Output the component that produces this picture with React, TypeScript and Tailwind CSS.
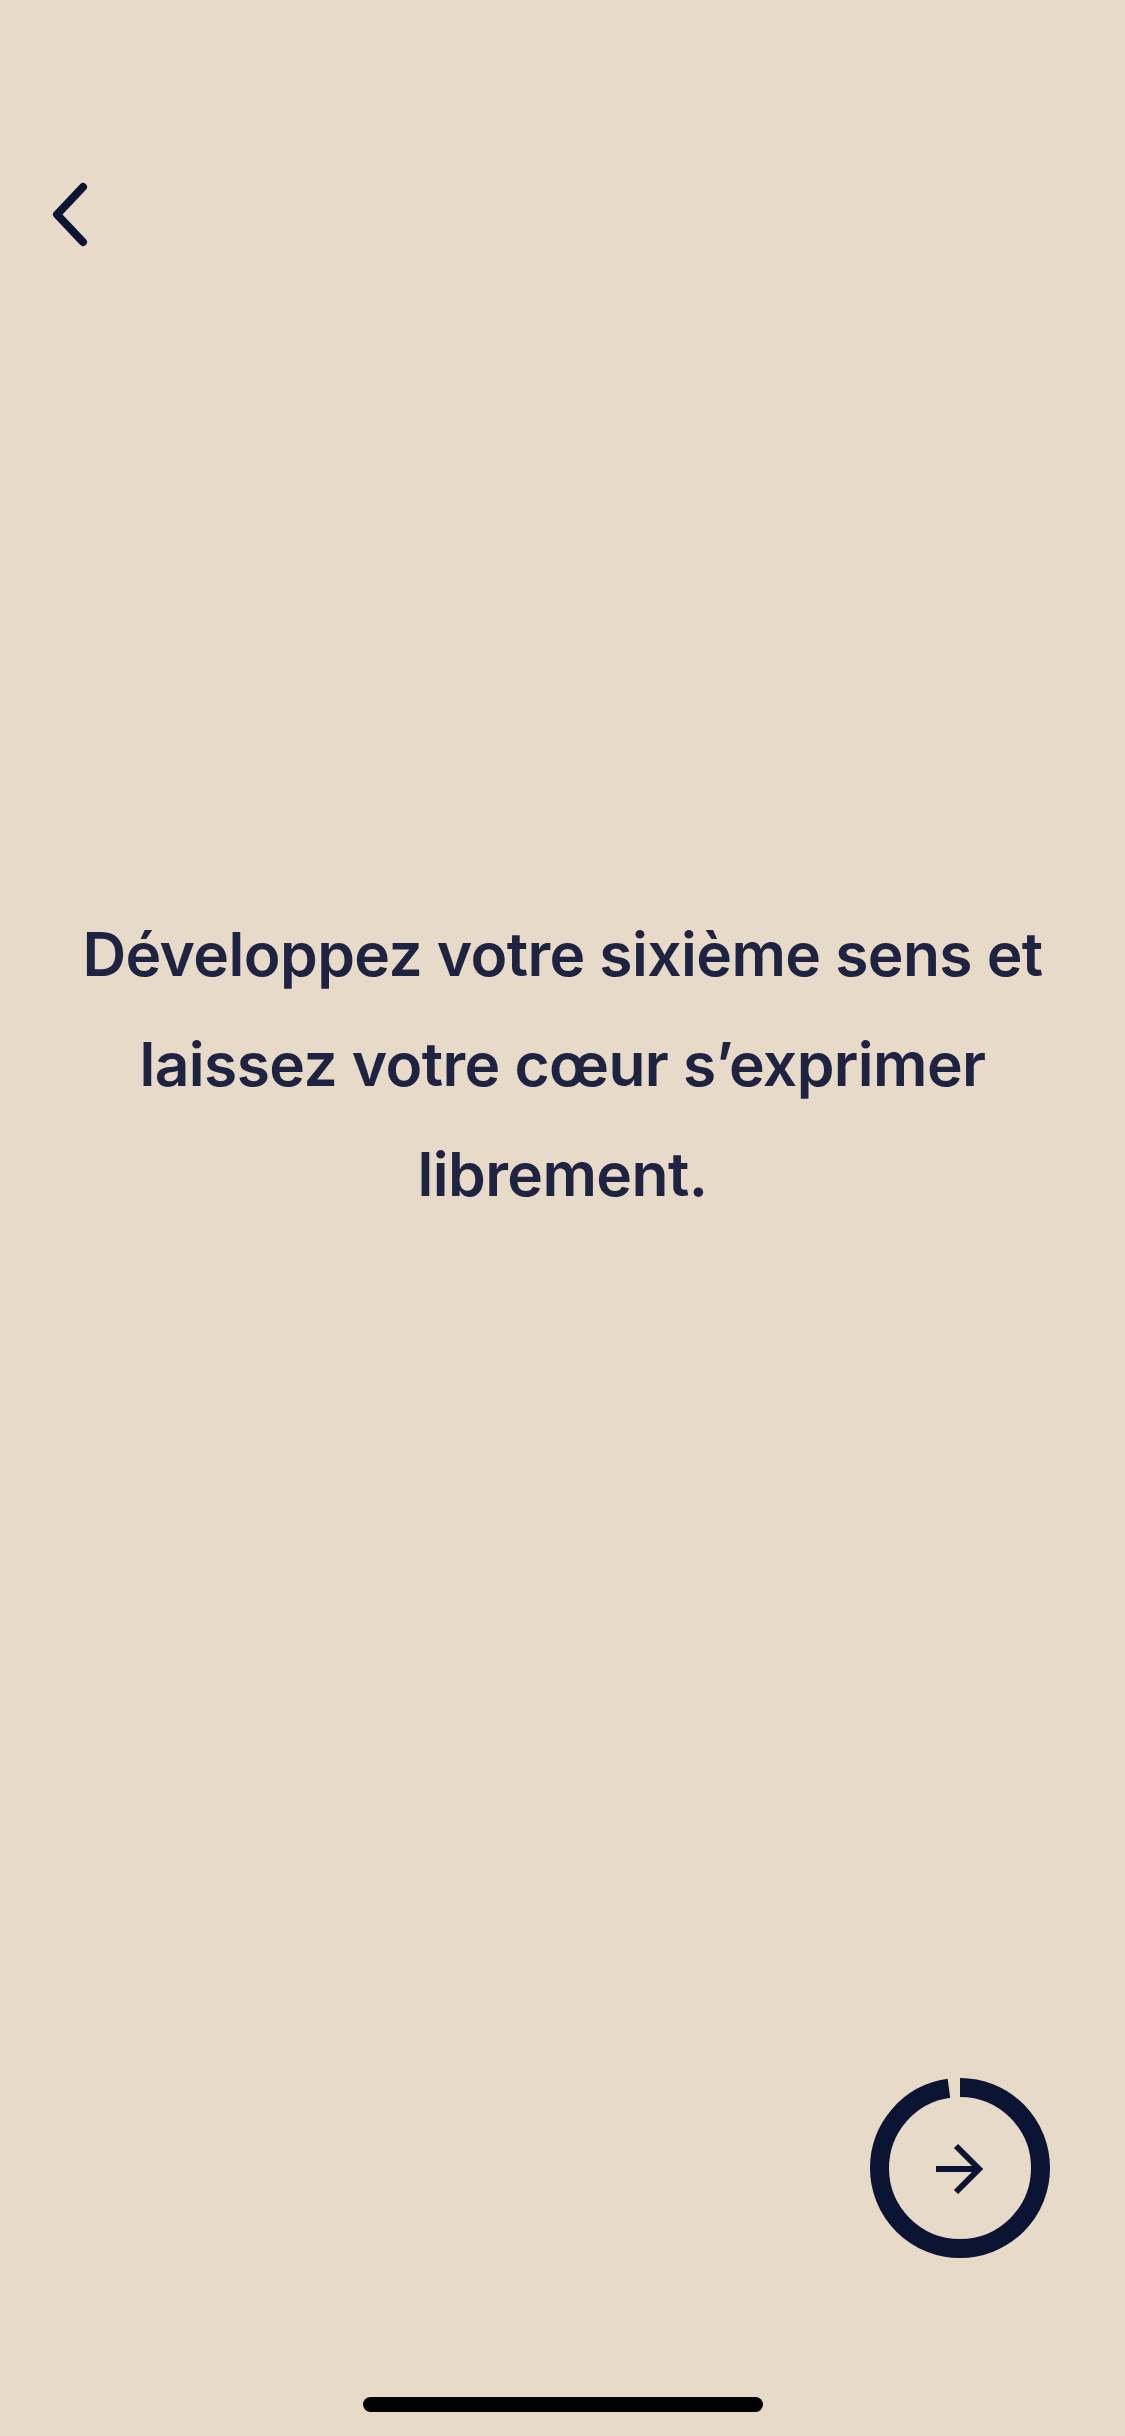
const BackChevron = () => (
  <svg width="42" height="71" viewBox="0 0 42 71" fill="none">
    <path
      d="M34 8 L8 35.5 L34 63"
      stroke="#0b1433"
      strokeWidth="8"
      strokeLinecap="round"
      strokeLinejoin="round"
    />
  </svg>
);

const NextButton = () => {
  const r = 80.5;
  const c = 2 * Math.PI * r;
  const gap = 12;
  return (
    <button className="w-[180px] h-[180px]">
      <svg width="180" height="180" viewBox="0 0 180 180" fill="none">
        <circle
          cx="90"
          cy="90"
          r={r}
          stroke="#0b1433"
          strokeWidth="19"
          strokeDasharray={`${c - gap} ${c}`}
          transform="rotate(-90 90 90)"
        />
        <path d="M66 91 H109" stroke="#0b1433" strokeWidth="6" />
        <path
          d="M86 68 L109 91 L86 114"
          stroke="#0b1433"
          strokeWidth="6"
          strokeLinejoin="miter"
        />
      </svg>
    </button>
  );
};

const App = () => {
  return (
    <div className="flex flex-col w-[1125px] h-[2436px] bg-[#e8dac8] font-['Inter','Noto_Sans',sans-serif]">
      <div className="pt-[179px] pl-[49px]">
        <BackChevron />
      </div>

      <div className="flex-1 flex flex-col">
        <p className="mt-[649px] px-[60px] text-center text-[60.5px] leading-[110px] font-semibold text-[#1d2340] tracking-[-0.6px]">
          Développez votre sixième sens et laissez votre cœur s’exprimer
          librement.
        </p>
      </div>

      <div className="flex justify-end pr-[75px]">
        <NextButton />
      </div>

      <div className="flex justify-center mt-[139px] mb-[24px]">
        <div className="w-[400px] h-[15px] rounded-full bg-black" />
      </div>
    </div>
  );
};

export default App;
